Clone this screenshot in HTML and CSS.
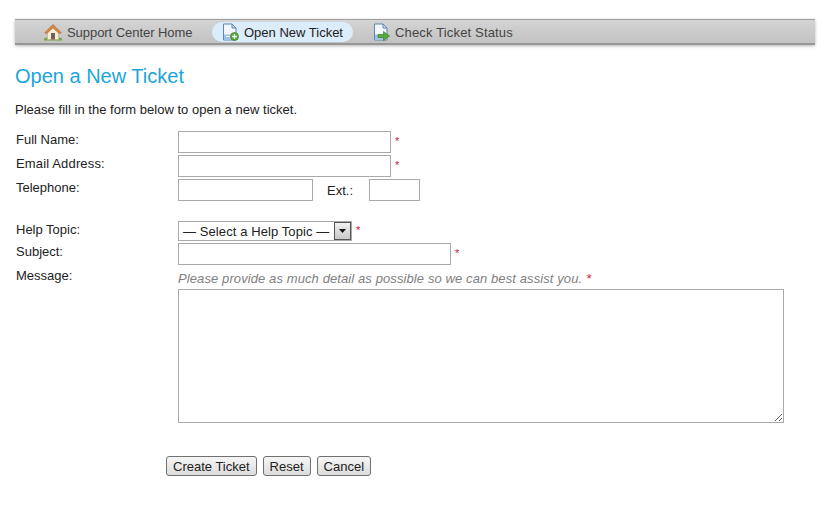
FILE: index.html
```html
<!DOCTYPE html>
<html>
<head>
<meta charset="utf-8">
<title>Open a New Ticket</title>
<link rel="stylesheet" href="styles.css">
</head>
<body>
<nav class="nav">
  <a class="tab tab-home">
    <svg class="ico" viewBox="0 0 18 18"><path d="M0 15.500c2-1.500 4-1.500 5 0h8c1-1.500 3-1.500 5 0v2H0z" fill="#6ea84a"/><path d="M3.500 9 9 4.500 14.500 9v7.500h-11z" fill="#f6ecd6" stroke="#c4ad84" stroke-width=".6"/><path d="M.8 9.800 9 1.500l8.200 8.300-2 .7L9 4.800 2.800 10.500z" fill="#de8a45" stroke="#a8642c" stroke-width=".7"/><rect x="7" y="10" width="4" height="6.500" fill="#6d6258"/></svg>
    <span>Support Center Home</span>
  </a>
  <a class="tab tab-active">
    <svg class="ico" viewBox="0 0 18 18"><path d="M2.500 1h8.500l4 4v12h-12.500z" fill="#f2f7fc" stroke="#5f86ad"/><path d="M11 1v4h4z" fill="#cfe0f0" stroke="#5f86ad"/><path d="M3 11.500h11.500v5H3z" fill="#9fc3e6"/><path d="M5 13.500h4" stroke="#fff"/><circle cx="13.500" cy="13.500" r="4" fill="#5aa83c" stroke="#3d7f28" stroke-width=".7"/><path d="M13.500 11.200v4.600M11.200 13.500h4.600" stroke="#fff" stroke-width="1.300"/></svg>
    <span>Open New Ticket</span>
  </a>
  <a class="tab tab-status">
    <svg class="ico" viewBox="0 0 18 18"><path d="M2.500 1h8.500l4 4v12h-12.500z" fill="#f2f7fc" stroke="#5f86ad"/><path d="M11 1v4h4z" fill="#cfe0f0" stroke="#5f86ad"/><path d="M3 11.500h11.500v5H3z" fill="#9fc3e6"/><path d="M6 11.500h5.500V8.500l6 4.500-6 4.500v-3H6z" fill="#5aa83c" stroke="#3d7f28" stroke-width=".7"/></svg>
    <span>Check Ticket Status</span>
  </a>
</nav>
<h1 class="title">Open a New Ticket</h1>
<p class="intro">Please fill in the form below to open a new ticket.</p>
<form class="form">
  <div class="row row-name">
    <label class="lbl">Full Name:</label>
    <div class="fld"><input class="in in-wide"><span class="req">*</span></div>
  </div>
  <div class="row row-email">
    <label class="lbl lbl-email">Email Address:</label>
    <div class="fld"><input class="in in-wide"><span class="req">*</span></div>
  </div>
  <div class="row row-phone">
    <label class="lbl">Telephone:</label>
    <div class="fld"><input class="in in-phone"><span class="ext">Ext.:</span><input class="in in-ext"></div>
  </div>
  <div class="row row-topic">
    <label class="lbl">Help Topic:</label>
    <div class="fld">
      <div class="select"><span class="select-text">— Select a Help Topic —</span><span class="select-btn"><svg viewBox="0 0 7 4" class="arrow"><path d="M0 0h7L3.500 4z"/></svg></span></div>
      <span class="req req-topic">*</span>
    </div>
  </div>
  <div class="row row-subject">
    <label class="lbl">Subject:</label>
    <div class="fld"><input class="in in-subject"><span class="req">*</span></div>
  </div>
  <div class="row row-message">
    <label class="lbl">Message:</label>
    <div class="fld-col">
      <em class="hint">Please provide as much detail as possible so we can best assist you. <span class="req-inline">*</span></em>
      <textarea class="msg"></textarea>
    </div>
  </div>
  <div class="actions">
    <button type="button" class="btn">Create Ticket</button>
    <button type="button" class="btn">Reset</button>
    <button type="button" class="btn">Cancel</button>
  </div>
</form>
</body>
</html>
```
FILE: styles.css
```css
* { box-sizing: border-box; }
html, body { margin: 0; padding: 0; }
body {
  width: 835px;
  height: 507px;
  overflow: hidden;
  background: #fff;
  color: #222;
  font-family: "Liberation Sans", Arial, sans-serif;
  font-size: 13px;
  padding: 19px 0 0 15px;
}
.nav {
  width: 800px;
  height: 26px;
  display: flex;
  align-items: center;
  padding: 1px 0 0 24px;
  border-top: 1px solid #a0a0a0;
  border-bottom: 2px solid #969696;
  background: linear-gradient(#d4d4d4, #c2c2c2);
  box-shadow: 0 1px 3px rgba(0,0,0,.3);
}
.tab {
  display: flex;
  align-items: center;
  height: 20px;
  color: #444;
  white-space: nowrap;
}
.tab-home { width: 173px; padding-left: 5px; letter-spacing: -.05px; }
.tab-active {
  width: 141px;
  padding-left: 9px;
  border-radius: 10px;
  background: #dbecfa;
  color: #222;
}
.tab-status { margin-left: 19px; letter-spacing: .16px; }
.ico { width: 18px; height: 18px; margin-right: 5px; flex: none; }
.title {
  margin: 19px 0 0;
  font-size: 20px;
  line-height: 24px;
  font-weight: normal;
  color: #1ba4dd;
}
.intro { margin: 15px 0 0; line-height: 14px; letter-spacing: .02px; }
.form { margin: 14px 0 0 1px; }
.row { display: flex; }
.lbl { width: 162px; flex: none; line-height: 14px; padding-top: 2px; }
.lbl-email { letter-spacing: .15px; }
.fld { display: flex; align-items: flex-start; }
.fld-col { display: flex; flex-direction: column; }
.in {
  display: block;
  height: 22px;
  margin: 0;
  padding: 0 2px;
  border: 1px solid #a9a9a9;
  background: #fff;
}
.in-wide { width: 213px; }
.in-phone { width: 135px; }
.in-ext { width: 51px; margin-left: 15px; }
.in-subject { width: 273px; }
.row-name { height: 24px; }
.row-email { height: 24px; }
.row-phone { height: 42px; }
.row-topic { height: 22px; }
.row-subject { height: 24px; }
.req { color: #d2143c; font-size: 11px; line-height: 14px; margin: 3px 0 0 4px; }
.req-topic { margin-top: 2px; }
.ext { width: 27px; margin-left: 14px; line-height: 14px; margin-top: 5px; }
.select {
  width: 174px;
  height: 20px;
  display: flex;
  align-items: center;
  justify-content: space-between;
  border: 1px solid #a9a9a9;
  padding: 0 0 0 4px;
  color: #222;
  white-space: nowrap;
  letter-spacing: .09px;
}
.select-btn {
  width: 17px;
  height: 18px;
  display: flex;
  align-items: center;
  justify-content: center;
  background: linear-gradient(#f0f0f0, #c8c8c8);
  border: 1px solid #555;
  flex: none;
}
.arrow { width: 7px; height: 4px; fill: #111; }
.hint {
  color: #808080;
  line-height: 14px;
  letter-spacing: .1px;
  margin-top: 5px;
}
.req-inline { color: #d2143c; }
.msg {
  display: block;
  width: 606px;
  height: 134px;
  margin: 3px 0 0;
  padding: 2px;
  border: 1px solid #a9a9a9;
  background: #fff;
  resize: both;
}
.actions { display: flex; gap: 6px; margin: 33px 0 0 150px; }
.btn {
  height: 20px;
  padding: 0 6px;
  border: 1px solid #707070;
  border-radius: 3px;
  background: linear-gradient(#f6f6f6, #dcdcdc);
  color: #222;
  font: 13px "Liberation Sans", Arial, sans-serif;
}
```
